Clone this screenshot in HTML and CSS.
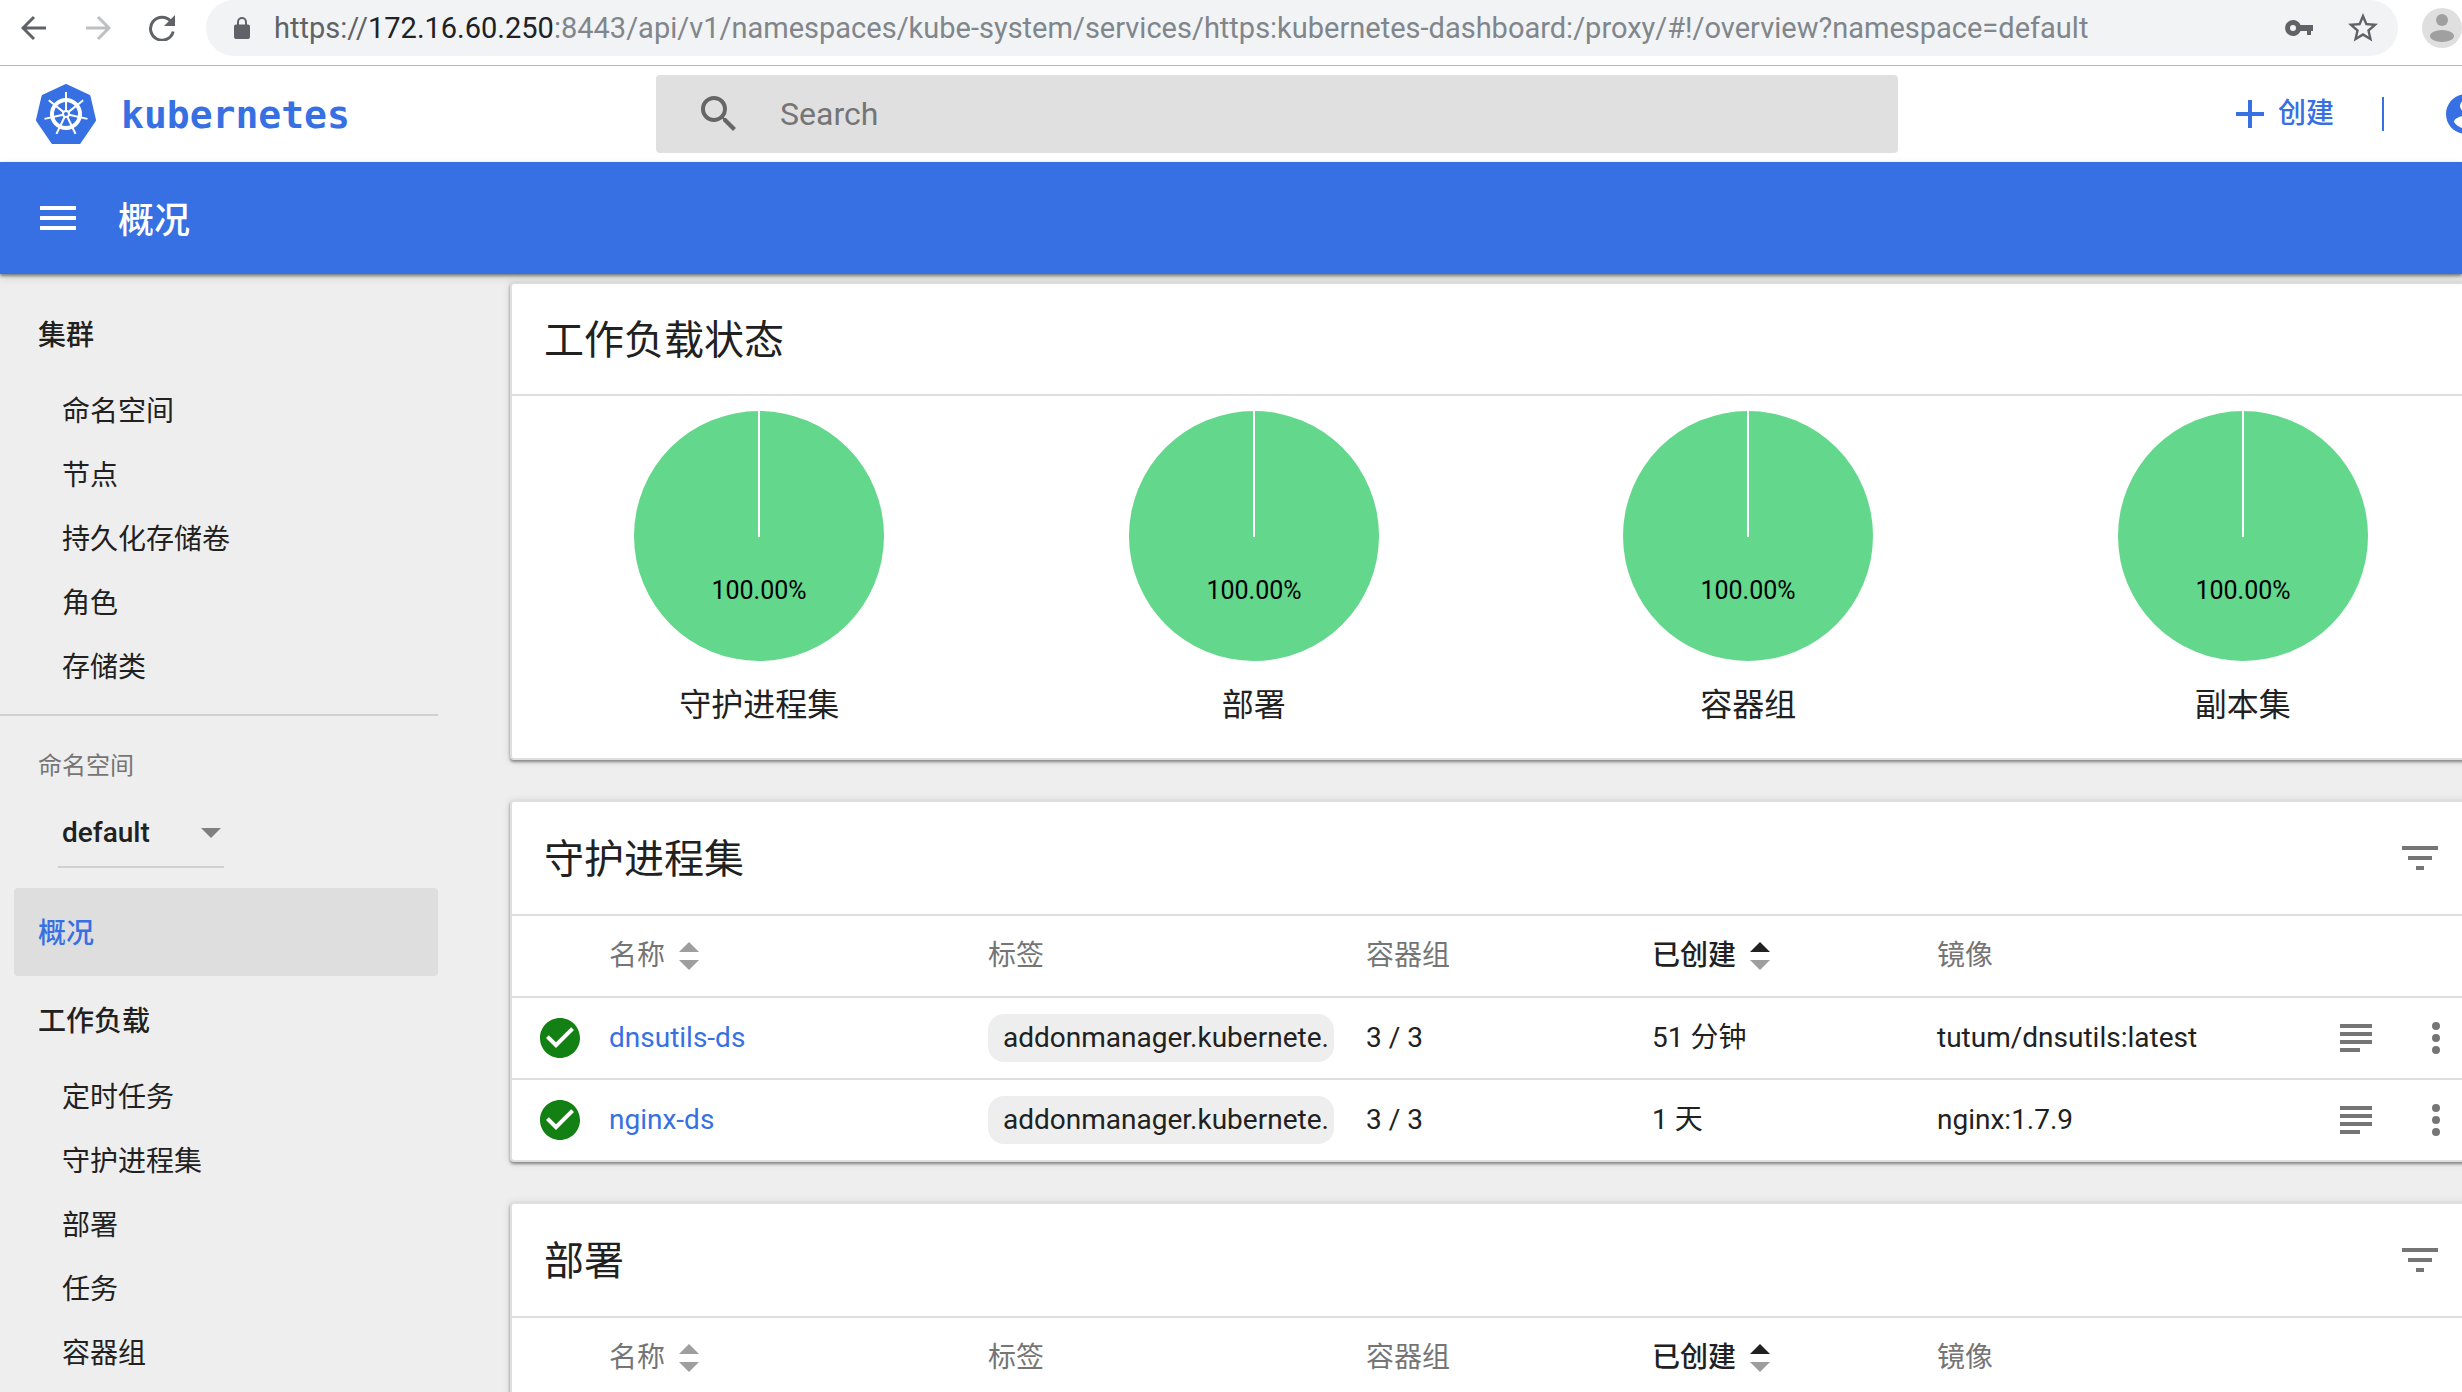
FILE: index.html
```html
<!DOCTYPE html>
<html lang="zh-CN">
<head>
<meta charset="utf-8">
<title>概况 - Kubernetes Dashboard</title>
<link rel="stylesheet" href="styles.css">
</head>
<body>
<svg class="sprite" aria-hidden="true">
  <symbol id="sort" viewBox="0 0 20 28"><path class="sort-up" d="M0 10 10 0l10 10z"/><path class="sort-down" d="M0 18h20L10 28z"/></symbol>
  <symbol id="filter" viewBox="0 0 24 24"><path d="M10 18h4v-2h-4v2zM3 6v2h18V6H3zm3 7h12v-2H6v2z"/></symbol>
  <symbol id="logs" viewBox="0 0 32 28"><path d="M0 0h32v4H0zM0 8h32v4H0zM0 16h32v4H0zM0 24h20v4H0z"/></symbol>
  <symbol id="more" viewBox="0 0 24 24"><path d="M12 8a2 2 0 1 0 0-4 2 2 0 0 0 0 4zm0 2a2 2 0 1 0 0 4 2 2 0 0 0 0-4zm0 6a2 2 0 1 0 0 4 2 2 0 0 0 0-4z"/></symbol>
  <symbol id="check" viewBox="0 0 24 24"><path d="M12 2C6.480 2 2 6.480 2 12s4.480 10 10 10 10-4.480 10-10S17.520 2 12 2zm-2 15-5-5 1.410-1.410L10 14.170l7.590-7.590L19 8l-9 9z"/></symbol>
</svg>

<div class="browser">
  <button class="browser-btn" aria-label="Back"><svg viewBox="0 0 26 26"><path d="M25 13H2M13 2 2 13l11 11" fill="none" stroke="#5f6368" stroke-width="3"/></svg></button>
  <button class="browser-btn" aria-label="Forward"><svg viewBox="0 0 26 26"><path d="M1 13h23M13 2l11 11-11 11" fill="none" stroke="#bdbfc1" stroke-width="3"/></svg></button>
  <button class="browser-btn" aria-label="Reload"><svg viewBox="0 0 26 26"><path d="M22 6.500A11.500 11.500 0 1 0 24.200 16.500" fill="none" stroke="#5f6368" stroke-width="3"/><path d="M26 0v11H15z" fill="#5f6368"/></svg></button>
  <div class="omnibox">
    <svg class="lock" viewBox="0 0 16 22"><path d="M2 7.500h12a2 2 0 0 1 2 2V20a2 2 0 0 1-2 2H2a2 2 0 0 1-2-2V9.500a2 2 0 0 1 2-2z" fill="#5f6368"/><path d="M4 9V5a4 4 0 0 1 8 0v4" fill="none" stroke="#5f6368" stroke-width="2"/></svg>
    <span class="url"><span class="scheme">https://</span><span class="host">172.16.60.250</span>:8443/api/v1/namespaces/kube-system/services/https:kubernetes-dashboard:/proxy/#!/overview?namespace=default</span>
    <button class="omni-btn" aria-label="Passwords"><svg class="key" viewBox="0 0 28 16"><path d="M15.500 5A8 8 0 1 0 15.500 11H22v4h4v-4h2V5z M8 5a3 3 0 1 1 0 6 3 3 0 0 1 0-6z" fill="#5f6368" fill-rule="evenodd"/></svg></button>
    <button class="omni-btn" aria-label="Bookmark"><svg class="star" viewBox="2 2 20 20"><path d="M22 9.240l-7.190-.62L12 2 9.190 8.630 2 9.240l5.460 4.730L5.820 21 12 17.270 18.180 21l-1.630-7.030L22 9.240zM12 15.400l-3.760 2.270 1-4.280-3.320-2.880 4.380-.38L12 6.100l1.710 4.040 4.380.38-3.320 2.880 1 4.280L12 15.400z" fill="#5f6368"/></svg></button>
  </div>
  <button class="profile" aria-label="Profile"><svg viewBox="0 0 40 40"><circle cx="20" cy="20" r="20" fill="#dfdfdf"/><circle cx="20" cy="12" r="6" fill="#a0a0a0"/><ellipse cx="20" cy="28" rx="12" ry="6" fill="#a0a0a0"/></svg></button>
</div>

<header class="header">
  <a class="brand" href="#">
    <svg class="logo" viewBox="-30 -30 60 60">
      <path d="M0-28 22.500-17.500 28 6 13 28H-13L-28 6-22.500-17.500z" fill="#3770e3" stroke="#3770e3" stroke-width="4" stroke-linejoin="round"/>
      <g fill="none" stroke="#fff">
        <circle r="14" stroke-width="4"/><circle r="3" stroke-width="2"/>
        <g stroke-width="2">
          <path d="M0-3V-22"/><path d="M0-3V-22" transform="rotate(51.430)"/><path d="M0-3V-22" transform="rotate(102.860)"/><path d="M0-3V-22" transform="rotate(154.290)"/><path d="M0-3V-22" transform="rotate(205.710)"/><path d="M0-3V-22" transform="rotate(257.140)"/><path d="M0-3V-22" transform="rotate(308.570)"/>
        </g>
      </g>
    </svg>
    <span class="wordmark">kubernetes</span>
  </a>
  <label class="search">
    <svg viewBox="3 3 18 18"><path d="M15.500 14h-.79l-.28-.27A6.470 6.470 0 0 0 16 9.500 6.500 6.500 0 1 0 9.500 16c1.610 0 3.090-.59 4.230-1.570l.27.28v.79l5 4.990L20.490 19l-4.990-5zm-6 0C7.010 14 5 11.990 5 9.500S7.010 5 9.500 5 14 7.010 14 9.500 11.990 14 9.500 14z"/></svg>
    <input type="text" placeholder="Search" aria-label="Search">
  </label>
  <div class="actions">
    <button class="create"><svg viewBox="0 0 28 28"><path d="M12 0h4v12h12v4H16v12h-4V16H0v-4h12z"/></svg>创建</button>
    <span class="bar"></span>
    <button class="account" aria-label="Account"><svg viewBox="2 2 20 20"><path d="M12 2C6.480 2 2 6.480 2 12s4.480 10 10 10 10-4.480 10-10S17.520 2 12 2zm0 3a3 3 0 1 1 0 6 3 3 0 0 1 0-6zm0 14.200a7.200 7.200 0 0 1-6-3.220c.03-1.990 4-3.080 6-3.080s5.970 1.090 6 3.080a7.200 7.200 0 0 1-6 3.220z"/></svg></button>
  </div>
</header>

<div class="titlebar">
  <button class="menu" aria-label="Menu"><svg viewBox="0 0 36 24"><path d="M0 0h36v4H0zM0 10h36v4H0zM0 20h36v4H0z"/></svg></button>
  <h1>概况</h1>
</div>

<div class="shell">
  <nav class="sidebar">
    <a class="group" href="#">集群</a>
    <a class="item" href="#">命名空间</a>
    <a class="item" href="#">节点</a>
    <a class="item" href="#">持久化存储卷</a>
    <a class="item" href="#">角色</a>
    <a class="item" href="#">存储类</a>
    <hr>
    <label class="ns-label" for="ns">命名空间</label>
    <div class="ns-select">
      <select id="ns"><option>default</option></select>
      <svg viewBox="0 0 20 10"><path d="M0 0h20L10 10z"/></svg>
    </div>
    <a class="group current" href="#">概况</a>
    <a class="group" href="#">工作负载</a>
    <a class="item" href="#">定时任务</a>
    <a class="item" href="#">守护进程集</a>
    <a class="item" href="#">部署</a>
    <a class="item" href="#">任务</a>
    <a class="item" href="#">容器组</a>
  </nav>

  <main class="content">
    <section class="card status">
      <div class="card-head"><h2>工作负载状态</h2></div>
      <div class="charts">
        <figure><svg viewBox="0 0 250 250"><circle cx="125" cy="125" r="125"/><path d="M125 0v126"/><text x="125" y="188">100.00%</text></svg><figcaption>守护进程集</figcaption></figure>
        <figure><svg viewBox="0 0 250 250"><circle cx="125" cy="125" r="125"/><path d="M125 0v126"/><text x="125" y="188">100.00%</text></svg><figcaption>部署</figcaption></figure>
        <figure><svg viewBox="0 0 250 250"><circle cx="125" cy="125" r="125"/><path d="M125 0v126"/><text x="125" y="188">100.00%</text></svg><figcaption>容器组</figcaption></figure>
        <figure><svg viewBox="0 0 250 250"><circle cx="125" cy="125" r="125"/><path d="M125 0v126"/><text x="125" y="188">100.00%</text></svg><figcaption>副本集</figcaption></figure>
      </div>
    </section>

    <section class="card">
      <div class="card-head"><h2>守护进程集</h2><button class="icon-btn" aria-label="Filter"><svg><use href="#filter"/></svg></button></div>
      <table>
        <colgroup><col class="c-state"><col class="c-name"><col class="c-labels"><col class="c-pods"><col class="c-age"><col class="c-image"><col class="c-logs"><col class="c-more"></colgroup>
        <thead><tr>
          <th></th><th>名称<svg class="sort"><use href="#sort"/></svg></th><th>标签</th><th>容器组</th><th class="sorted">已创建<svg class="sort"><use href="#sort"/></svg></th><th>镜像</th><th></th><th></th>
        </tr></thead>
        <tbody>
          <tr><td><svg class="ok"><use href="#check"/></svg></td><td><a href="#">dnsutils-ds</a></td><td><span class="chip">addonmanager.kubernete.</span></td><td>3 / 3</td><td>51 分钟</td><td>tutum/dnsutils:latest</td><td><button class="icon-btn logs" aria-label="Logs"><svg><use href="#logs"/></svg></button></td><td><button class="icon-btn" aria-label="More"><svg><use href="#more"/></svg></button></td></tr>
          <tr><td><svg class="ok"><use href="#check"/></svg></td><td><a href="#">nginx-ds</a></td><td><span class="chip">addonmanager.kubernete.</span></td><td>3 / 3</td><td>1 天</td><td>nginx:1.7.9</td><td><button class="icon-btn logs" aria-label="Logs"><svg><use href="#logs"/></svg></button></td><td><button class="icon-btn" aria-label="More"><svg><use href="#more"/></svg></button></td></tr>
        </tbody>
      </table>
    </section>

    <section class="card">
      <div class="card-head"><h2>部署</h2><button class="icon-btn" aria-label="Filter"><svg><use href="#filter"/></svg></button></div>
      <table>
        <colgroup><col class="c-state"><col class="c-name"><col class="c-labels"><col class="c-pods"><col class="c-age"><col class="c-image"><col class="c-logs"><col class="c-more"></colgroup>
        <thead><tr>
          <th></th><th>名称<svg class="sort"><use href="#sort"/></svg></th><th>标签</th><th>容器组</th><th class="sorted">已创建<svg class="sort"><use href="#sort"/></svg></th><th>镜像</th><th></th><th></th>
        </tr></thead>
      </table>
    </section>
  </main>
</div>
</body>
</html>
```
FILE: styles.css
```css
:root {
  --blue: #3770e3;
  --text: #212121;
  --muted: #757575;
  --line: #dfdfdf;
  --bleed: 30px;
}

* { box-sizing: border-box; }

html, body { height: 100%; }

body {
  margin: 0;
  display: flex;
  flex-direction: column;
  overflow: hidden;
  background: #eee;
  color: var(--text);
  font: 28px/40px Roboto, "Noto Sans CJK SC", sans-serif;
}

a { color: var(--blue); text-decoration: none; }
svg { display: block; flex: none; }
.sprite { position: absolute; width: 0; height: 0; }

button {
  display: flex;
  align-items: center;
  padding: 0;
  border: 0;
  background: none;
  color: inherit;
  font: inherit;
}

h1, h2 { margin: 0; font-weight: 400; }

/* Browser toolbar */
.browser {
  flex: none;
  display: flex;
  height: 66px;
  padding-left: 21px;
  padding-bottom: 9px;
  border-bottom: 1px solid #b6b6b6;
  background: #fff;
}
.browser-btn { width: 64px; }
.browser-btn svg { width: 26px; height: 26px; }
.browser-btn:nth-child(3) { width: 57px; }
.omnibox {
  flex: 1;
  display: flex;
  align-items: center;
  min-width: 0;
  padding: 0 20px 0 28px;
  border-radius: 28px;
  background: #f1f3f4;
}
.lock { width: 16px; height: 22px; }
.url {
  flex: 1;
  padding-left: 24px;
  color: #80868b;
  font-size: 29px;
  white-space: nowrap;
}
.scheme { color: #5f6368; }
.host { color: #202124; }
.omni-btn { margin-left: 35px; }
.key { width: 28px; height: 16px; }
.star { width: 30px; height: 30px; }
.profile { margin-left: 24px; }
.profile svg { width: 40px; height: 40px; }

/* Product header */
.header {
  flex: none;
  display: flex;
  align-items: center;
  height: 96px;
  margin-right: calc(-1 * var(--bleed));
  padding: 0 6px 0 36px;
  background: #fff;
  color: var(--blue);
}
.brand { display: flex; align-items: center; gap: 25px; width: 620px; }
.logo { width: 60px; height: 60px; }
.wordmark { padding-top: 2px; font: 700 38px/60px "DejaVu Sans Mono", monospace; }
.search {
  flex: 1;
  display: flex;
  align-items: center;
  gap: 43px;
  height: 78px;
  padding-left: 45px;
  border-radius: 4px;
  background: #e0e0e0;
}
.search svg { width: 36px; height: 36px; fill: #666; }
.search input {
  flex: 1;
  padding: 0;
  border: 0;
  outline: 0;
  background: none;
  color: var(--text);
  font: inherit;
  font-size: 32px;
}
.search input::placeholder { color: #757575; }
.actions { display: flex; align-items: center; justify-content: flex-end; width: 588px; }
.create { gap: 14px; font-weight: 500; }
.create svg { width: 28px; height: 28px; fill: var(--blue); }
.bar { width: 2px; height: 34px; margin: 0 62px 0 48px; background: var(--blue); }
.account svg { width: 40px; height: 40px; fill: var(--blue); }

.titlebar {
  z-index: 1;
  flex: none;
  display: flex;
  align-items: center;
  gap: 42px;
  height: 112px;
  padding-left: 40px;
  background: var(--blue);
  color: #fff;
  box-shadow: 0 2px 3px rgba(0, 0, 0, .45), 0 4px 10px rgba(0, 0, 0, .1);
}
.titlebar h1 { padding-top: 6px; font-size: 36px; font-weight: 500; line-height: 48px; }
.menu svg { width: 36px; height: 24px; fill: #fff; }

.shell {
  flex: 1;
  display: flex;
  min-height: 0;
  margin-right: calc(-1 * var(--bleed));
}

/* Navigation */
.sidebar { flex: none; width: 438px; padding-top: 16px; }
.sidebar a { display: flex; align-items: center; padding-top: 3px; color: var(--text); }
.sidebar .group {
  height: 88px;
  margin-left: 14px;
  padding-left: 24px;
  border-radius: 4px;
  font-weight: 500;
}
.sidebar .item { height: 64px; padding-left: 62px; }
.sidebar .current { background: #dedede; color: var(--blue); }
.sidebar hr { height: 2px; margin: 16px 0 0; border: 0; background: #d0d0d0; }
.ns-label { display: block; padding: 30px 0 14px 38px; color: var(--muted); font-size: 24px; }
.ns-select {
  display: flex;
  align-items: center;
  width: 166px;
  height: 68px;
  margin: 0 0 20px 58px;
  padding: 0 3px 0 4px;
  border-bottom: 2px solid #d0d0d0;
}
.ns-select select {
  appearance: none;
  flex: 1;
  min-width: 0;
  padding: 0;
  border: 0;
  background: none;
  color: var(--text);
  font: inherit;
  font-weight: 500;
}
.ns-select svg { width: 20px; height: 10px; fill: #808080; }

/* Cards */
.content {
  flex: 1;
  display: flex;
  flex-direction: column;
  gap: 40px;
  min-width: 0;
  padding: 8px 0 0 72px;
}
.card {
  flex: none;
  border: 2px solid var(--line);
  border-radius: 4px;
  background: #fff;
  box-shadow: 0 2px 3px rgba(0, 0, 0, .4), 0 1px 8px rgba(0, 0, 0, .12);
}
.card-head {
  display: flex;
  align-items: center;
  justify-content: space-between;
  height: 114px;
  padding: 0 46px 0 32px;
  border-bottom: 2px solid var(--line);
}
.status .card-head { height: 112px; }
.card h2 { padding-top: 3px; font-size: 40px; line-height: 56px; }
.card-head .icon-btn svg { width: 48px; height: 48px; fill: var(--muted); }

.charts { display: grid; grid-template-columns: repeat(4, 1fr); padding: 15px 0 29px; }
figure { display: flex; flex-direction: column; align-items: center; gap: 20px; margin: 0; }
figure svg { width: 250px; height: 250px; }
figure circle { fill: #63d78b; }
figure path { stroke: #fff; stroke-width: 2; }
figure text { font-size: 25px; text-anchor: middle; fill: #000; }
figcaption { font-size: 32px; line-height: 48px; }

table { width: 100%; border-collapse: separate; border-spacing: 0; table-layout: fixed; }
.c-state { width: 97px; }
.c-name { width: 379px; }
.c-labels { width: 378px; }
.c-pods { width: 286px; }
.c-age { width: 285px; }
.c-logs { width: 72px; }
.c-more { width: 78px; }
th, td {
  height: 82px;
  padding: 0;
  border-bottom: 2px solid var(--line);
  font-weight: 400;
  text-align: left;
  white-space: nowrap;
}
tbody tr:last-child td { height: 80px; border-bottom: 0; }
th { color: var(--muted); }
th.sorted { color: var(--text); font-weight: 500; }
.sort {
  display: inline-block;
  width: 20px;
  height: 28px;
  margin: -4px 0 0 14px;
  vertical-align: middle;
}
.sorted .sort { --up: var(--text); }
.sort-up { fill: var(--up, #9e9e9e); }
.sort-down { fill: #9e9e9e; }
.ok { width: 48px; height: 48px; margin-left: 24px; fill: #128012; }
.chip {
  display: block;
  width: 346px;
  height: 48px;
  padding-left: 15px;
  overflow: hidden;
  border-radius: 16px;
  background: #eee;
  line-height: 48px;
}
td .icon-btn svg { width: 48px; height: 48px; fill: var(--muted); }
td .logs svg { width: 32px; height: 28px; }
```
